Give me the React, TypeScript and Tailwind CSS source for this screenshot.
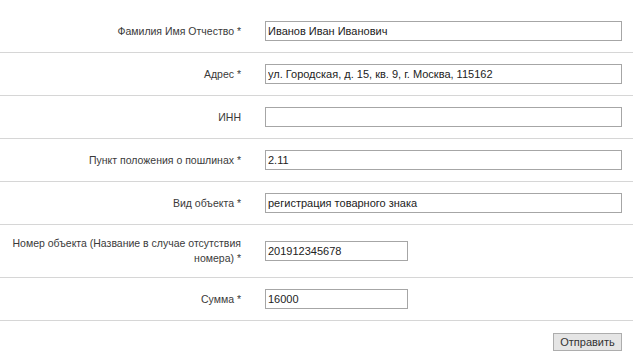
const rows = [
  { label: "Фамилия Имя Отчество *", value: "Иванов Иван Иванович", short: false },
  { label: "Адрес *", value: "ул. Городская, д. 15, кв. 9, г. Москва, 115162", short: false },
  { label: "ИНН", value: "", short: false },
  { label: "Пункт положения о пошлинах *", value: "2.11", short: false },
  { label: "Вид объекта *", value: "регистрация товарного знака", short: false },
  {
    label: "Номер объекта (Название в случае отсутствия номера) *",
    value: "201912345678",
    short: true,
  },
  { label: "Сумма *", value: "16000", short: true },
];

export default function App() {
  return (
    <div className="w-[640px] h-[357px] bg-white text-[#333] font-['Liberation_Sans',Arial,sans-serif]">
      <div className="w-[633px] pt-[10px]">
        {rows.map((row, i) => (
          <div key={i} className="flex items-center border-b border-[#d6d6d6] py-[11px]">
            <div className="w-[250px] shrink-0 pl-[4px] pr-[9px] text-right text-[10.5px] leading-[15px] text-[#3a3a3a]">
              {row.label}
            </div>
            <div className="flex pl-[15px]">
              <input
                type="text"
                defaultValue={row.value}
                className={
                  (row.short ? "w-[143px]" : "w-[357px]") +
                  " block h-[20px] border border-[#a6a6a6] bg-white px-[2px] text-[11px] text-[#222] outline-none"
                }
              />
            </div>
          </div>
        ))}
        <div className="flex justify-end pr-[11px] mt-[12px]">
          <button className="h-[18px] w-[69px] border border-[#adadad] bg-[#e5e5e5] text-[11px] text-[#333] leading-none">
            Отправить
          </button>
        </div>
      </div>
    </div>
  );
}
